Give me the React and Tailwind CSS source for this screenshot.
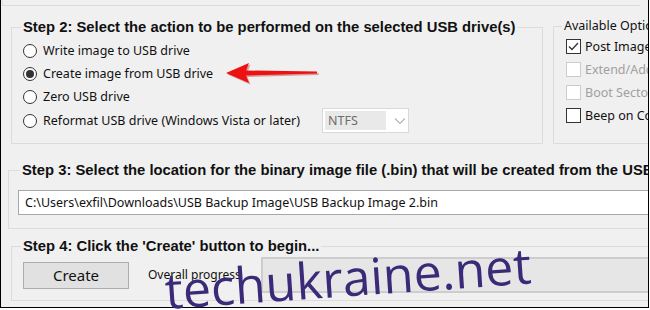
import React from "react";

function Radio({ checked, label }) {
  return (
    <div className="flex items-center h-[23px]">
      <span className="w-[14px] h-[14px] rounded-full border border-[#333] bg-white flex items-center justify-center shrink-0">
        {checked && <span className="w-[8px] h-[8px] rounded-full bg-[#333]" />}
      </span>
      <span className="ml-[6px] whitespace-nowrap">{label}</span>
    </div>
  );
}

function Check({ checked, disabled, label }) {
  return (
    <div className="flex items-center h-[23px]">
      <span
        className={
          "w-[15px] h-[15px] border bg-white flex items-center justify-center shrink-0 " +
          (disabled ? "border-[#cccccc]" : "border-[#333]")
        }
      >
        {checked && (
          <svg width="13" height="13" viewBox="0 0 13 13">
            <path d="M2 6.5 L5 9.5 L11 3" fill="none" stroke="#333" strokeWidth="1.3" />
          </svg>
        )}
      </span>
      <span className={"ml-[4px] whitespace-nowrap " + (disabled ? "text-[#a0a0a0]" : "")}>{label}</span>
    </div>
  );
}

export default function App() {
  return (
    <div className="relative w-[650px] h-[310px] bg-white overflow-hidden">
      <div className="relative w-[649px] h-[308px] bg-[#f0f0f0] border-l border-r border-b border-black overflow-hidden text-[12.5px] leading-[16px] text-[#111] font-['Noto_Sans',sans-serif]">
        {/* tail of the group above */}
        <div className="h-[6px] ml-[1px] mr-[8px] border-l border-b border-[#dcdcdc]" />

        <div className="flex mt-[13px]">
          {/* Step 2 */}
          <fieldset className="ml-[10px] w-[532px] h-[125px] shrink-0 border border-[#dcdcdc]">
            <legend className="ml-[9px] px-[2px] font-bold text-[14.8px] leading-[16px] font-['Liberation_Sans',sans-serif] whitespace-nowrap">
              Step 2: Select the action to be performed on the selected USB drive(s)
            </legend>
            <div className="mt-[4px] pl-[11px]">
              <Radio label="Write image to USB drive" />
              <Radio checked label="Create image from USB drive" />
              <Radio label="Zero USB drive" />
              <div className="flex items-center">
                <div className="w-[299px]">
                  <Radio label="Reformat USB drive (Windows Vista or later)" />
                </div>
                <div className="w-[87px] h-[25px] bg-white border border-[#d9d9d9] flex items-center p-[2px]">
                  <div className="w-[62px] h-[19px] bg-[#e9e9e9] text-[#6d6d6d] flex items-center pl-[3px]">NTFS</div>
                  <svg className="ml-[8px]" width="12" height="8" viewBox="0 0 12 8">
                    <path d="M1 1.5 L6 6.5 L11 1.5" fill="none" stroke="#b4b4b4" strokeWidth="1.2" />
                  </svg>
                </div>
              </div>
            </div>
          </fieldset>

          {/* Available Options */}
          <fieldset className="ml-[10px] -mt-px w-[130px] h-[126px] shrink-0 border border-[#dcdcdc]">
            <legend className="ml-[8px] px-[2px] whitespace-nowrap">Available Options</legend>
            <div className="mt-[1px] pl-[12px]">
              <Check checked label="Post Image Verify" />
              <Check disabled label="Extend/Add Partition" />
              <Check disabled label="Boot Sector Only" />
              <Check label="Beep on Completion" />
            </div>
          </fieldset>
        </div>

        {/* Step 3 */}
        <fieldset className="mt-[18px] ml-[7px] w-[700px] border border-[#dcdcdc] pb-[13px]">
          <legend className="ml-[11px] px-[2px] font-bold text-[14.8px] leading-[16px] font-['Liberation_Sans',sans-serif] whitespace-nowrap">
            Step 3: Select the location for the binary image file (.bin) that will be created from the USB drive(s)
          </legend>
          <div className="mt-[12px] ml-[9px] h-[25px] bg-white border border-[#a8a8a8] flex items-center px-[6px] whitespace-nowrap">
            C:\Users\exfil\Downloads\USB Backup Image\USB Backup Image 2.bin
          </div>
        </fieldset>

        {/* Step 4 */}
        <fieldset className="mt-[9px] ml-[10px] w-[700px] border border-[#dcdcdc] pb-[7px]">
          <legend className="ml-[9px] px-[2px] font-bold text-[14.8px] leading-[16px] font-['Liberation_Sans',sans-serif] whitespace-nowrap">
            Step 4: Click the 'Create' button to begin...
          </legend>
          <div className="mt-[3px] pl-[11px] flex items-center">
            <button className="w-[106px] h-[27px] bg-[#e1e1e1] border border-[#adadad] text-[15px]">Create</button>
            <span className="ml-[19px] text-[12px] whitespace-nowrap">Overall progress</span>
            <div className="ml-[20px] w-[420px] h-[36px] bg-[#e6e6e6] border-2 border-[#cdcdcd]" />
          </div>
        </fieldset>
      </div>

      {/* annotation arrow */}
      <svg className="absolute left-[222px] top-[60px]" width="98" height="26" viewBox="0 0 98 26">
        <path d="M4 13 L27 3 L24 10.5 L95 11.5 L95 13.5 L24 15.5 L27 23 Z" fill="#aa0000" opacity="0.35" transform="translate(1.5,1.5)" />
        <path d="M4 13 L27 3 L24 10.5 L95 11.5 L95 13.5 L24 15.5 L27 23 Z" fill="#ee1111" />
      </svg>

      {/* watermark */}
      <div className="absolute left-[165px] top-[262px] text-[50px] leading-[56px] text-[#3b2a78] font-['Open_Sans',sans-serif] -rotate-4 origin-left whitespace-nowrap">
        techukraine.net
      </div>
    </div>
  );
}
